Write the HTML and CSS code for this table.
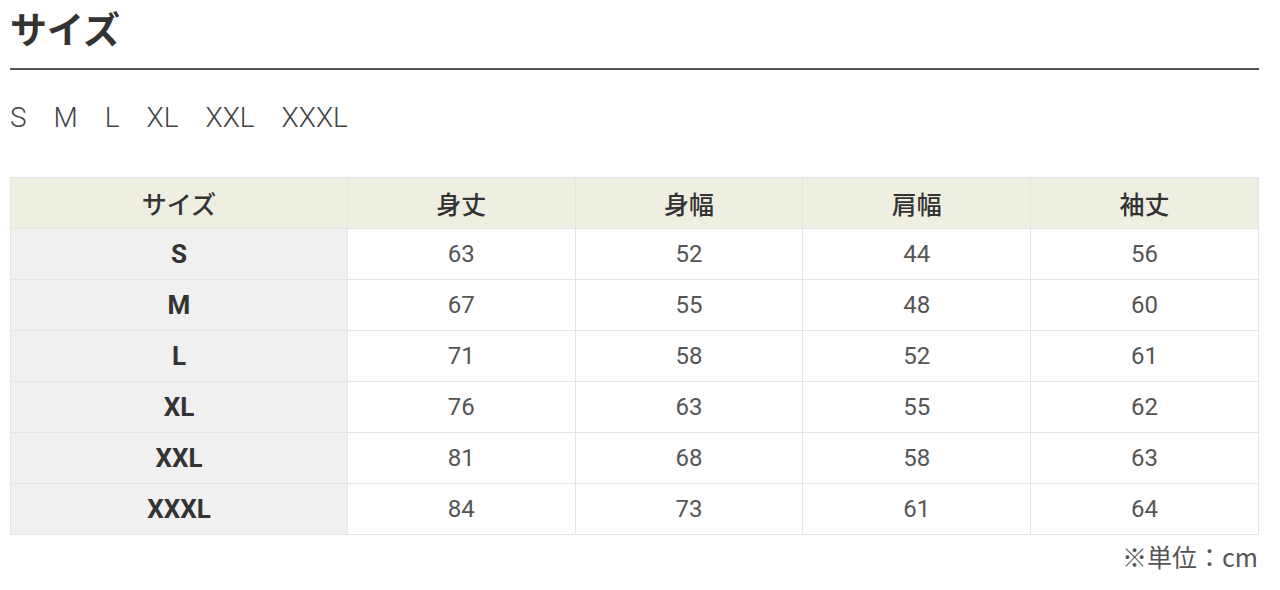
FILE: index.html
```html
<!DOCTYPE html>
<html lang="ja">
<head>
<meta charset="utf-8">
<title>サイズ</title>
<link rel="stylesheet" href="styles.css">
</head>
<body>
<section class="size-section">
  <h2 class="section-title">サイズ</h2>
  <ul class="size-list">
    <li>S</li>
    <li>M</li>
    <li>L</li>
    <li>XL</li>
    <li>XXL</li>
    <li>XXXL</li>
  </ul>
  <table class="size-table">
    <colgroup>
      <col class="col-size">
      <col><col><col><col>
    </colgroup>
    <thead>
      <tr><th>サイズ</th><th>身丈</th><th>身幅</th><th>肩幅</th><th>袖丈</th></tr>
    </thead>
    <tbody>
      <tr><th>S</th><td>63</td><td>52</td><td>44</td><td>56</td></tr>
      <tr><th>M</th><td>67</td><td>55</td><td>48</td><td>60</td></tr>
      <tr><th>L</th><td>71</td><td>58</td><td>52</td><td>61</td></tr>
      <tr><th>XL</th><td>76</td><td>63</td><td>55</td><td>62</td></tr>
      <tr><th>XXL</th><td>81</td><td>68</td><td>58</td><td>63</td></tr>
      <tr><th>XXXL</th><td>84</td><td>73</td><td>61</td><td>64</td></tr>
    </tbody>
  </table>
  <p class="unit-note">※単位：cm</p>
</section>
</body>
</html>
```
FILE: styles.css
```css
html, body {
  margin: 0;
  padding: 0;
  background: #ffffff;
}

body {
  font-family: Roboto, "Noto Sans CJK JP", sans-serif;
  color: #444;
}

.size-section {
  padding: 8px 21px 0 10px;
}

.section-title {
  margin: 0;
  font-family: "Noto Sans CJK JP", sans-serif;
  font-size: 37px;
  line-height: 40px;
  font-weight: 700;
  color: #333;
  padding-bottom: 20px;
  border-bottom: 2px solid #555;
}

.size-list {
  list-style: none;
  margin: 32px 0 0;
  padding: 0;
  display: flex;
  gap: 27px;
  font-family: Roboto, sans-serif;
  font-weight: 300;
  font-size: 28px;
  line-height: 32px;
  color: #444;
}

.size-table {
  margin-top: 43px;
  width: 100%;
  border-collapse: collapse;
  table-layout: fixed;
  border: 1px solid #e4e4e4;
}

.col-size {
  width: 27%;
}

.size-table th,
.size-table td {
  border: 1px solid #e4e4e4;
  height: 50px;
  padding: 0;
  text-align: center;
  vertical-align: middle;
}

.size-table thead th {
  background: #efefe1;
  font-family: "Noto Sans CJK JP", sans-serif;
  font-size: 25px;
  font-weight: 500;
  color: #333;
}

.size-table tbody th {
  background: #f0f0f0;
  font-family: Roboto, sans-serif;
  font-weight: 700;
  font-size: 26px;
  color: #333;
}

.size-table td {
  background: #fff;
  font-family: Roboto, sans-serif;
  font-size: 24px;
  color: #555;
}

.unit-note {
  margin: 6px 0 0;
  text-align: right;
  font-family: "Noto Sans CJK JP", sans-serif;
  font-size: 25px;
  line-height: 30px;
  color: #555;
  padding-right: 1px;
}
```
